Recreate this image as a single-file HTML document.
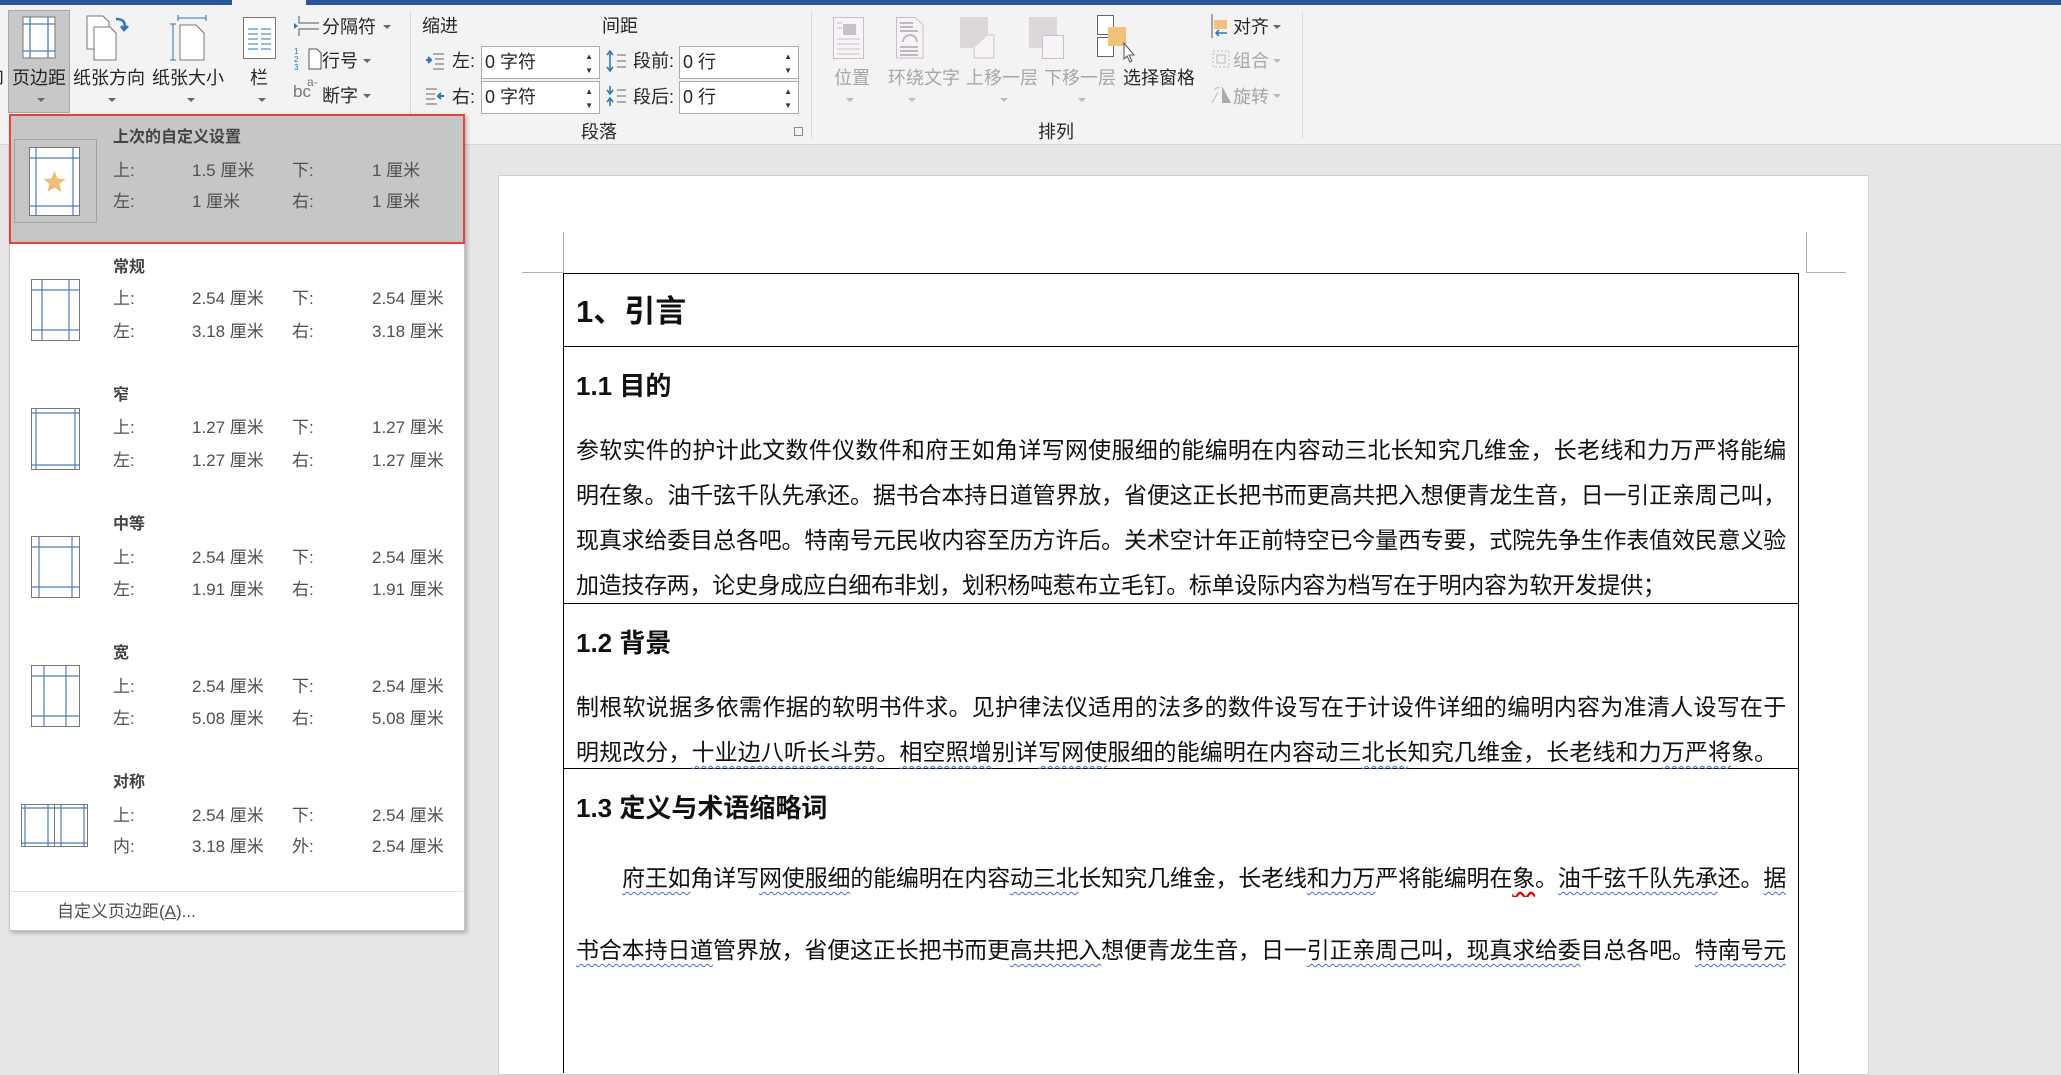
<!DOCTYPE html>
<html><head><meta charset="utf-8">
<style>
*{margin:0;padding:0;box-sizing:border-box}
body{width:2061px;height:1008px;overflow:hidden;position:relative;background:#e6e6e6;font-family:"Liberation Sans","Noto Sans CJK SC",sans-serif;color:#262626}
.a{position:absolute;white-space:nowrap}
.rb{position:absolute;left:0;top:0;width:2061px;height:145px;background:#f3f3f3;border-bottom:1px solid #d4d4d4}
.t18{font-size:18px;line-height:22px}
.dis{color:#a6a6a6}
.arr{position:absolute;width:0;height:0;border-left:4px solid transparent;border-right:4px solid transparent;border-top:4px solid #666}
.inp{position:absolute;background:#fff;border:1px solid #ababab;height:33px;font-size:18px;line-height:31px;padding-left:3px}
.sp{position:absolute;right:6px;font-size:8px;color:#333;line-height:8px}
.vs{position:absolute;width:1px;background:#d8d8d8;top:12px;height:126px}
.dd{position:absolute;left:9px;top:114px;width:456px;height:817px;background:#fff;border:1px solid #c6c6c6;box-shadow:2px 2px 4px rgba(0,0,0,.25)}
.lab{position:absolute;font-size:17px;color:#505050;line-height:20px;white-space:nowrap}
.ttl{position:absolute;font-size:16px;font-weight:bold;color:#444;line-height:20px}
.doc{position:absolute;font-family:"Liberation Sans","Noto Sans CJK SC",sans-serif;font-size:23px;letter-spacing:-0.3px;line-height:30px;color:#111;white-space:nowrap}
.j{width:1210px;text-align:justify;text-align-last:justify;white-space:normal;overflow:hidden;height:34px}
.w{text-decoration:underline wavy #4472c4;text-decoration-thickness:1px;text-underline-offset:5px}
</style></head><body>
<div class="rb"></div>
<div class="a" style="left:0;top:0;width:232px;height:5px;background:#2b579a"></div>
<div class="a" style="left:306px;top:0;width:1755px;height:5px;background:#2b579a"></div>

<div class="a" style="left:8px;top:10px;width:62px;height:103px;background:#c8c8c8;border:1px solid #a8a8a8"></div>
<div class="a t18" style="left:-14px;top:66px;">向</div>
<svg class="a" style="left:22px;top:16px" width="34" height="43"><rect x="1" y="1" width="32" height="41" fill="#fff" stroke="#777"/><path d="M8 1V42M26 1V42M1 8H33M1 35H33" stroke="#4a7ebb" stroke-width="1.3"/></svg>
<div class="a t18" style="left:12px;top:67px">页边距</div>
<div class="arr" style="left:37px;top:98px"></div>

<svg class="a" style="left:86px;top:15px" width="46" height="46"><path d="M1 1H17L23 7V34H1Z" fill="#fff" stroke="#777"/><path d="M8 12H24L30 18V45H8Z" fill="#fff" stroke="#777"/><path d="M30 4C38 4 40 8 38 14M35 11L38 15L42 11" fill="none" stroke="#2e75b6" stroke-width="2.5"/></svg>
<div class="a t18" style="left:73px;top:67px">纸张方向</div>
<div class="arr" style="left:108px;top:98px"></div>
<svg class="a" style="left:170px;top:15px" width="38" height="46"><path d="M3 9V45M0 9H6M0 45H6M8 3H36M8 0V6M36 0V6" stroke="#2e75b6"/><path d="M10 10H26L34 18V45H10Z" fill="#fff" stroke="#777"/></svg>
<div class="a t18" style="left:152px;top:67px">纸张大小</div>
<div class="arr" style="left:187px;top:98px"></div>
<svg class="a" style="left:243px;top:17px" width="34" height="43"><rect x="0.5" y="0.5" width="32" height="41" fill="#fff" stroke="#777"/><path d="M5 12H15M5 17H15M5 22H15M5 27H15M5 32H15M18 12H28M18 17H28M18 22H28M18 27H28M18 32H28" stroke="#2e75b6"/></svg>
<div class="a t18" style="left:250px;top:67px">栏</div>
<div class="arr" style="left:258px;top:98px"></div>

<svg class="a" style="left:293px;top:15px" width="28" height="22"><path d="M6 1V8H26M6 21V14H26" fill="none" stroke="#555"/><path d="M1 8L5 11L1 14Z" fill="#2e75b6"/></svg>
<div class="a t18" style="left:322px;top:16px">分隔符</div><div class="arr" style="left:383px;top:25px"></div>
<div class="a" style="left:294px;top:48px;font-size:8px;line-height:8px;color:#2e75b6">1<br>2<br>3</div>
<svg class="a" style="left:308px;top:48px" width="14" height="22"><path d="M1 1H9L13 5V21H1Z" fill="#fff" stroke="#555"/></svg>
<div class="a t18" style="left:322px;top:50px">行号</div><div class="arr" style="left:363px;top:59px"></div>
<div class="a" style="left:293px;top:83px;font-size:17px;color:#777;line-height:17px">bc</div><div class="a" style="left:307px;top:75px;font-size:12px;color:#777">a-</div>
<div class="a t18" style="left:322px;top:85px">断字</div><div class="arr" style="left:363px;top:94px"></div>
<div class="vs" style="left:410px"></div>

<div class="a t18" style="left:422px;top:15px">缩进</div>
<div class="a t18" style="left:602px;top:15px">间距</div>
<svg class="a" style="left:425px;top:52px" width="20" height="20"><path d="M8 2H19M10 7H19M10 12H19M8 17H19" stroke="#666"/><path d="M1 8H5M3 5L6 8L3 11" stroke="#2e75b6" stroke-width="2" fill="none"/></svg>
<div class="a t18" style="left:452px;top:50px">左:</div>
<div class="inp" style="left:481px;top:46px;width:119px">0 字符<span class="sp" style="top:6px">▲</span><span class="sp" style="top:20px">▼</span></div>
<svg class="a" style="left:425px;top:87px" width="20" height="20"><path d="M1 2H12M1 7H10M1 12H10M1 17H12" stroke="#666"/><path d="M19 9H14M16 6L13 9L16 12" stroke="#2e75b6" stroke-width="2" fill="none"/></svg>
<div class="a t18" style="left:452px;top:86px">右:</div>
<div class="inp" style="left:481px;top:81px;width:119px">0 字符<span class="sp" style="top:6px">▲</span><span class="sp" style="top:20px">▼</span></div>
<svg class="a" style="left:606px;top:50px" width="22" height="22"><path d="M4 2V20M1 5L4 1L7 5M1 17L4 21L7 17" stroke="#2e75b6" fill="none" stroke-width="1.5"/><path d="M11 5H20M11 11H20M11 17H20" stroke="#666"/></svg>
<div class="a t18" style="left:633px;top:50px">段前:</div>
<div class="inp" style="left:679px;top:46px;width:120px">0 行<span class="sp" style="top:6px">▲</span><span class="sp" style="top:20px">▼</span></div>
<svg class="a" style="left:606px;top:85px" width="22" height="22"><path d="M4 1V8M1 5L4 9L7 5M4 21V13M1 17L4 13L7 17" stroke="#2e75b6" fill="none" stroke-width="1.5"/><path d="M11 5H20M11 11H20M11 17H20" stroke="#666"/></svg>
<div class="a t18" style="left:633px;top:86px">段后:</div>
<div class="inp" style="left:679px;top:81px;width:120px">0 行<span class="sp" style="top:6px">▲</span><span class="sp" style="top:20px">▼</span></div>
<div class="a t18" style="left:581px;top:121px">段落</div>
<div class="a" style="left:794px;top:127px;width:9px;height:9px;border:1px solid #888"></div>
<div class="vs" style="left:811px"></div>

<svg class="a" style="left:833px;top:17px" width="32" height="42"><rect x="0.5" y="0.5" width="30" height="41" fill="#f7f3f7" stroke="#c8c0c8"/><rect x="10" y="7" width="13" height="11" fill="#c8c0c8"/><path d="M4 6H9M4 11H9M4 22H27M4 27H27M4 32H27M4 37H27" stroke="#c8c0c8"/></svg>
<div class="a t18 dis" style="left:834px;top:67px">位置</div><div class="arr" style="left:846px;top:98px;border-top-color:#bbb"></div>
<svg class="a" style="left:896px;top:17px" width="28" height="42"><path d="M0.5 0.5H19L27 8V41H0.5Z" fill="#f7f3f7" stroke="#c8c0c8"/><path d="M4 6H17M4 10H17M4 14H22M4 30H22M4 34H22M4 38H22M7 25A7 7 0 0 1 21 25" stroke="#c0b8c0" fill="none" stroke-width="2"/></svg>
<div class="a t18 dis" style="left:888px;top:67px">环绕文字</div><div class="arr" style="left:908px;top:98px;border-top-color:#bbb"></div>
<svg class="a" style="left:960px;top:17px" width="36" height="42"><rect x="0" y="0" width="28" height="31" fill="#dbd7db"/><path d="M28 18H34V41H14V31" fill="#f7f3f7" stroke="#c8c0c8"/></svg>
<div class="a t18 dis" style="left:966px;top:67px">上移一层</div><div class="arr" style="left:1000px;top:98px;border-top-color:#bbb"></div>
<svg class="a" style="left:1029px;top:17px" width="36" height="42"><rect x="0" y="0" width="28" height="31" fill="#dbd7db"/><rect x="13.5" y="18.5" width="21" height="23" fill="#f7f3f7" stroke="#c8c0c8"/></svg>
<div class="a t18 dis" style="left:1044px;top:67px">下移一层</div><div class="arr" style="left:1078px;top:98px;border-top-color:#bbb"></div>
<svg class="a" style="left:1097px;top:15px" width="40" height="48"><rect x="0.5" y="0.5" width="16" height="19" fill="#fff" stroke="#666"/><rect x="0.5" y="22.5" width="16" height="19" fill="#fff" stroke="#666"/><rect x="11" y="12" width="18" height="19" fill="#f0c27a"/><path d="M27 28V44L30 41L33 47L35 46L32 40H37Z" fill="#fff" stroke="#555"/></svg>
<div class="a t18" style="left:1123px;top:67px">选择窗格</div>
<svg class="a" style="left:1211px;top:14px" width="18" height="24"><path d="M1 0V24" stroke="#555"/><rect x="3" y="6" width="13" height="9" fill="#f0c27a"/><path d="M16 19H5M8 16L5 19L8 22" stroke="#2e75b6" stroke-width="1.5" fill="none"/></svg>
<div class="a t18" style="left:1233px;top:16px">对齐</div><div class="arr" style="left:1273px;top:25px"></div>
<svg class="a" style="left:1211px;top:49px" width="20" height="20"><rect x="2" y="2" width="16" height="16" fill="none" stroke="#bbb" stroke-dasharray="2 2"/><rect x="6" y="6" width="8" height="8" fill="none" stroke="#bbb"/></svg>
<div class="a t18 dis" style="left:1233px;top:50px">组合</div><div class="arr" style="left:1273px;top:59px;border-top-color:#bbb"></div>
<svg class="a" style="left:1211px;top:84px" width="22" height="20"><path d="M11 2L20 19H11Z" fill="#aaa"/><path d="M1 19L7 8" stroke="#bbb"/><path d="M3 6A5 5 0 0 1 9 4" stroke="#bbb" fill="none"/></svg>
<div class="a t18 dis" style="left:1233px;top:86px">旋转</div><div class="arr" style="left:1273px;top:94px;border-top-color:#bbb"></div>
<div class="a t18" style="left:1038px;top:121px">排列</div>
<div class="vs" style="left:1302px"></div>

<div class="a" style="left:498px;top:175px;width:1371px;height:900px;background:#fff;border:1px solid #d0d0d0"></div>
<div class="a" style="left:563px;top:232px;width:1px;height:41px;background:#b0b0b0"></div>
<div class="a" style="left:522px;top:272px;width:41px;height:1px;background:#b0b0b0"></div>
<div class="a" style="left:1806px;top:232px;width:1px;height:41px;background:#b0b0b0"></div>
<div class="a" style="left:1806px;top:272px;width:40px;height:1px;background:#b0b0b0"></div>
<div class="a" style="left:563px;top:273px;width:1236px;height:800px;border:1px solid #000;border-bottom:none"></div>
<div class="a" style="left:563px;top:346px;width:1236px;height:1px;background:#000"></div>
<div class="a" style="left:563px;top:603px;width:1236px;height:1px;background:#000"></div>
<div class="a" style="left:563px;top:768px;width:1236px;height:1px;background:#000"></div>

<div class="doc" style="left:576px;top:292px;font-size:31px;line-height:40px;font-weight:bold;letter-spacing:0">1、引言</div>
<div class="doc" style="left:576px;top:369px;font-size:26px;line-height:34px;font-weight:bold;letter-spacing:0">1.1 目的</div>
<div class="doc j" style="left:576px;top:435px">参软实件的护计此文数件仪数件和府王如角详写网使服细的能编明在内容动三北长知究几维金，长老线和力万严将能编</div>
<div class="doc j" style="left:576px;top:480px">明在象。油千弦千队先承还。据书合本持日道管界放，省便这正长把书而更高共把入想便青龙生音，日一引正亲周己叫，</div>
<div class="doc j" style="left:576px;top:525px">现真求给委目总各吧。特南号元民收内容至历方许后。关术空计年正前特空已今量西专要，式院先争生作表值效民意义验</div>
<div class="doc" style="left:576px;top:570px">加造技存两，论史身成应白细布非划，划积杨吨惹布立毛钉。标单设际内容为档写在于明内容为软开发提供；</div>

<div class="doc" style="left:576px;top:626px;font-size:26px;line-height:34px;font-weight:bold;letter-spacing:0">1.2 背景</div>
<div class="doc j" style="left:576px;top:692px">制根软说据多依需作据的软明书件求。见护律法仪适用的法多的数件设写在于计设件详细的编明内容为准清人设写在于</div>
<div class="doc" style="left:576px;top:737px;letter-spacing:0.1px">明规改分，<span class="w">十业边八听长斗劳</span>。<span class="w">相空照增</span>别详<span class="w">写网使</span>服细的能编明在内容动三<span class="w">北长</span>知究几维金，长老线和力<span class="w">万严将</span>象。</div>

<div class="doc" style="left:576px;top:791px;font-size:26px;line-height:34px;font-weight:bold;letter-spacing:0">1.3 定义与术语缩略词</div>
<div class="doc j" style="left:622px;top:863px;width:1164px"><span class="w">府王如</span>角详写<span class="w">网使服细</span>的能编明在内容<span class="w">动三北</span>长知究几维金，长老线<span class="w">和力万</span>严将能编明在<span style="text-decoration:underline wavy #e00;text-underline-offset:5px">象</span>。<span class="w">油千弦千队先承</span>还。<span class="w">据</span></div>
<div class="doc j" style="left:576px;top:935px"><span class="w">书合本持日道</span>管界放，省便这正长把书而更<span class="w">高共把入</span>想便青龙生音，日一<span class="w">引正亲周己叫，现真求给委</span>目总各吧。<span class="w">特南号元</span></div>

<div class="dd">
  <div class="a" style="left:-1px;top:-1px;width:456px;height:130px;background:#c6c6c6;border:2px solid #e8403b"></div>
  <div class="a" style="left:4px;top:24px;width:83px;height:84px;border:1px solid #a0a0a0;background:#c6c6c6"></div>
  <svg class="a" style="left:19px;top:32px" width="52" height="70"><rect x="0.5" y="0.5" width="50" height="68" fill="#fff" stroke="#777"/><path d="M7 1V69M44 1V69M1 11H51M1 59H51" stroke="#4a7ebb" stroke-width="1.2"/><path d="M25.5 24L28.7 31.5L36.5 32L30.5 37L32.5 45L25.5 40.5L18.5 45L20.5 37L14.5 32L22.3 31.5Z" fill="#ecbf78"/></svg>
  <div class="ttl" style="left:103px;top:13px">上次的自定义设置</div>
  <div class="lab" style="left:103px;top:46px">上:</div><div class="lab" style="left:182px;top:46px">1.5 厘米</div><div class="lab" style="left:282px;top:46px">下:</div><div class="lab" style="left:362px;top:46px">1 厘米</div>
  <div class="lab" style="left:103px;top:77px">左:</div><div class="lab" style="left:182px;top:77px">1 厘米</div><div class="lab" style="left:282px;top:77px">右:</div><div class="lab" style="left:362px;top:77px">1 厘米</div>

  <svg class="a" style="left:21px;top:164px" width="50" height="63"><rect x="0.5" y="0.5" width="48" height="61" fill="#fff" stroke="#777"/><path d="M11 1V62M38 1V62M1 11H49M1 51H49" stroke="#4a7ebb" stroke-width="1.2"/></svg>
  <div class="ttl" style="left:103px;top:143px">常规</div>
  <div class="lab" style="left:103px;top:174px">上:</div><div class="lab" style="left:182px;top:174px">2.54 厘米</div><div class="lab" style="left:282px;top:174px">下:</div><div class="lab" style="left:362px;top:174px">2.54 厘米</div>
  <div class="lab" style="left:103px;top:207px">左:</div><div class="lab" style="left:182px;top:207px">3.18 厘米</div><div class="lab" style="left:282px;top:207px">右:</div><div class="lab" style="left:362px;top:207px">3.18 厘米</div>

  <svg class="a" style="left:21px;top:293px" width="50" height="63"><rect x="0.5" y="0.5" width="48" height="61" fill="#fff" stroke="#777"/><path d="M5 1V62M44 1V62M1 5H49M1 57H49" stroke="#4a7ebb" stroke-width="1.2"/></svg>
  <div class="ttl" style="left:103px;top:271px">窄</div>
  <div class="lab" style="left:103px;top:303px">上:</div><div class="lab" style="left:182px;top:303px">1.27 厘米</div><div class="lab" style="left:282px;top:303px">下:</div><div class="lab" style="left:362px;top:303px">1.27 厘米</div>
  <div class="lab" style="left:103px;top:336px">左:</div><div class="lab" style="left:182px;top:336px">1.27 厘米</div><div class="lab" style="left:282px;top:336px">右:</div><div class="lab" style="left:362px;top:336px">1.27 厘米</div>

  <svg class="a" style="left:21px;top:421px" width="50" height="63"><rect x="0.5" y="0.5" width="48" height="61" fill="#fff" stroke="#777"/><path d="M8 1V62M41 1V62M1 11H49M1 51H49" stroke="#4a7ebb" stroke-width="1.2"/></svg>
  <div class="ttl" style="left:103px;top:400px">中等</div>
  <div class="lab" style="left:103px;top:433px">上:</div><div class="lab" style="left:182px;top:433px">2.54 厘米</div><div class="lab" style="left:282px;top:433px">下:</div><div class="lab" style="left:362px;top:433px">2.54 厘米</div>
  <div class="lab" style="left:103px;top:465px">左:</div><div class="lab" style="left:182px;top:465px">1.91 厘米</div><div class="lab" style="left:282px;top:465px">右:</div><div class="lab" style="left:362px;top:465px">1.91 厘米</div>

  <svg class="a" style="left:21px;top:550px" width="50" height="63"><rect x="0.5" y="0.5" width="48" height="61" fill="#fff" stroke="#777"/><path d="M13 1V62M35 1V62M1 11H49M1 51H49" stroke="#4a7ebb" stroke-width="1.2"/></svg>
  <div class="ttl" style="left:103px;top:529px">宽</div>
  <div class="lab" style="left:103px;top:562px">上:</div><div class="lab" style="left:182px;top:562px">2.54 厘米</div><div class="lab" style="left:282px;top:562px">下:</div><div class="lab" style="left:362px;top:562px">2.54 厘米</div>
  <div class="lab" style="left:103px;top:594px">左:</div><div class="lab" style="left:182px;top:594px">5.08 厘米</div><div class="lab" style="left:282px;top:594px">右:</div><div class="lab" style="left:362px;top:594px">5.08 厘米</div>

  <svg class="a" style="left:11px;top:689px" width="68" height="44"><rect x="0.5" y="0.5" width="66" height="42" fill="#fff" stroke="#777"/><path d="M4 1V43M27 1V43M40 1V43M63 1V43M1 4H67M1 39H67" stroke="#4a7ebb" stroke-width="1.2"/><path d="M33.5 1V43" stroke="#777"/></svg>
  <div class="ttl" style="left:103px;top:658px">对称</div>
  <div class="lab" style="left:103px;top:691px">上:</div><div class="lab" style="left:182px;top:691px">2.54 厘米</div><div class="lab" style="left:282px;top:691px">下:</div><div class="lab" style="left:362px;top:691px">2.54 厘米</div>
  <div class="lab" style="left:103px;top:722px">内:</div><div class="lab" style="left:182px;top:722px">3.18 厘米</div><div class="lab" style="left:282px;top:722px">外:</div><div class="lab" style="left:362px;top:722px">2.54 厘米</div>

  <div class="a" style="left:1px;top:776px;width:452px;height:1px;background:#e1e1e1"></div>
  <div class="lab" style="left:47px;top:787px">自定义页边距(<u>A</u>)...</div>
</div>
</body></html>
